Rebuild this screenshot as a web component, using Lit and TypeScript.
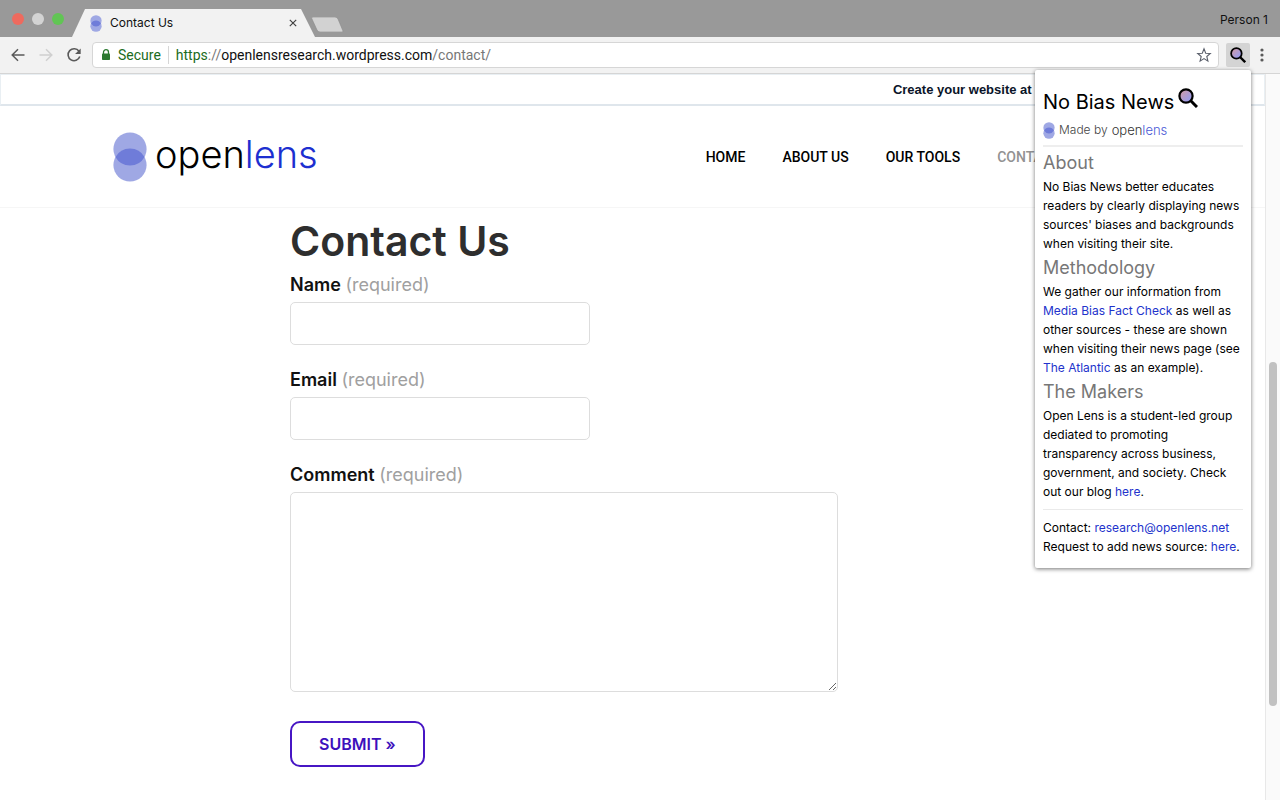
import { LitElement, html, css, svg } from "lit";
import { customElement } from "lit/decorators.js";

const lensMark = (cls: string) => html`
  <svg class=${cls} viewBox="0 0 34 50" aria-hidden="true">
    <circle cx="17" cy="17" r="16.6" fill="#9fa8e4" />
    <circle cx="17" cy="33" r="16.6" fill="#9fa8e4" />
    <path d="M2.5 25A16.6 16.6 0 0 1 31.5 25A16.6 16.6 0 0 1 2.5 25Z" fill="#6f7cd9" />
  </svg>
`;

const magnifier = (cls: string, id: string) => html`
  <svg class=${cls} viewBox="0 0 20 20" aria-hidden="true">
    ${svg`
      <defs>
        <linearGradient id=${id} x1="0" y1="0" x2="1" y2="1">
          <stop offset="0.1" stop-color="#cf9aa6" />
          <stop offset="0.8" stop-color="#9a9cec" />
        </linearGradient>
      </defs>
      <path d="M12.5 12.5L19 19" stroke="#000" stroke-width="3" />
      <circle cx="8" cy="8" r="6.6" fill="url(#${id})" stroke="#000" stroke-width="2.2" />
    `}
  </svg>
`;

@customElement("browser-chrome")
export class BrowserChrome extends LitElement {
  static styles = css`
    :host {
      display: block;
      font-family: Roboto, "Liberation Sans", sans-serif;
      color: #111;
    }
    button {
      border: 0;
      padding: 0;
      background: none;
      display: flex;
      align-items: center;
      justify-content: center;
    }
    svg {
      display: block;
    }
    .strip {
      display: flex;
      align-items: flex-end;
      height: 37px;
      background: #999;
      padding: 0 12px;
    }
    .lights {
      display: flex;
      gap: 8px;
      align-self: center;
      width: 60px;
    }
    .light {
      width: 12px;
      height: 12px;
      border-radius: 50%;
    }
    .red {
      background: #ee6a5e;
    }
    .grey {
      background: #d3d3d3;
    }
    .green {
      background: #61c554;
    }
    .tab {
      display: flex;
      align-items: center;
      width: 243px;
      height: 28px;
      box-sizing: border-box;
      padding: 0 16px 0 18px;
      background: #f2f2f2;
      clip-path: polygon(13px 0, 229px 0, 243px 100%, 0 100%);
    }
    .favicon {
      width: 12px;
      height: 17px;
    }
    .tabtitle {
      flex: 1;
      font: 12px/18px Inter, Roboto, sans-serif;
      padding-left: 8px;
    }
    .newtab {
      width: 33px;
      height: 15px;
      margin: 0 0 5px -4px;
    }
    .person {
      margin-left: auto;
      align-self: center;
      padding-top: 3px;
      font: 12px/18px Inter, Roboto, sans-serif;
    }
    .toolbar {
      display: flex;
      align-items: center;
      height: 36px;
      background: #f2f2f2;
      border-bottom: 1px solid #d5d5d5;
      padding: 0 8px 0 10px;
    }
    .nav {
      display: flex;
      gap: 12px;
      padding-right: 10px;
    }
    .nav button {
      width: 16px;
      height: 16px;
    }
    .omnibox {
      flex: 1;
      display: flex;
      align-items: center;
      height: 26px;
      box-sizing: border-box;
      background: #fff;
      border: 1px solid #d6d6d6;
      border-radius: 4px;
      padding: 0 6px 0 8px;
      font-size: 14px;
      line-height: 20px;
    }
    .secure {
      color: #1b6b20;
      padding: 0 7px;
      border-right: 1px solid #d6d6d6;
      line-height: 18px;
    }
    .url {
      flex: 1;
      padding-left: 7px;
      outline: none;
      white-space: nowrap;
    }
    .scheme {
      color: #1b6b20;
    }
    .dim {
      color: #777;
    }
    .ext {
      width: 24px;
      height: 24px;
      margin: 0 2px 0 7px;
      border-radius: 2px;
      background: #d4d4d4;
    }
    .lens {
      width: 16px;
      height: 16px;
    }
    .more {
      width: 20px;
      height: 20px;
    }
  `;

  render() {
    return html`
      <div class="strip">
        <div class="lights">
          <span class="light red"></span>
          <span class="light grey"></span>
          <span class="light green"></span>
        </div>
        <div class="tab">
          ${lensMark("favicon")}
          <span class="tabtitle">Contact Us</span>
          <button aria-label="Close tab">
            <svg width="12" height="12" viewBox="0 0 12 12">
              <path d="M2.8 2.8L9.2 9.2M9.2 2.8L2.8 9.2" stroke="#444" stroke-width="1.2" />
            </svg>
          </button>
        </div>
        <button class="newtab" aria-label="New tab">
          <svg width="33" height="15" viewBox="0 0 33 15">
            <path d="M2 0H24Q26 0 27 2L32 14Q32 15 31 15H9Q7 15 6 13L0.5 1Q0.500 0 2 0Z" fill="#d2d2d2" stroke="#8a8a8a" stroke-width="0.6" />
          </svg>
        </button>
        <span class="person">Person 1</span>
      </div>
      <div class="toolbar">
        <div class="nav">
          <button aria-label="Back">
            <svg width="16" height="16" viewBox="0 0 16 16" fill="none" stroke="#5a5a5a" stroke-width="1.5">
              <path d="M14.500 8H2.500M8 2.200L2.200 8L8 13.800" />
            </svg>
          </button>
          <button aria-label="Forward">
            <svg width="16" height="16" viewBox="0 0 16 16" fill="none" stroke="#d0d0d0" stroke-width="1.5">
              <path d="M1.500 8H13.500M8 2.200L13.800 8L8 13.800" />
            </svg>
          </button>
          <button aria-label="Reload">
            <svg width="16" height="16" viewBox="0 0 16 16">
              <path d="M13 4.200A6 6 0 1 0 13.800 9.600" fill="none" stroke="#5a5a5a" stroke-width="1.6" />
              <path d="M14.700 1.400V7H9.100Z" fill="#5a5a5a" />
            </svg>
          </button>
        </div>
        <div class="omnibox">
          <svg width="10" height="12" viewBox="0 0 10 12">
            <path d="M2.500 5V3.200A2.500 2.500 0 0 1 7.500 3.200V5" fill="none" stroke="#2c7a31" stroke-width="1.300" />
            <rect x="1" y="4.500" width="8" height="6.500" rx="0.800" fill="#2c7a31" />
          </svg>
          <span class="secure">Secure</span>
          <div class="url" role="textbox" aria-label="Address" contenteditable="true"><span class="scheme">https</span><span class="dim">://</span>openlensresearch.wordpress.com<span class="dim">/contact/</span></div>
          <button aria-label="Bookmark this page">
            <svg width="16" height="16" viewBox="0 0 16 16">
              <path d="M8 1.800L9.700 6.200L14.300 6.500L10.800 9.500L11.900 14.100L8 11.600L4.100 14.100L5.200 9.500L1.700 6.500L6.300 6.200Z" fill="none" stroke="#5a5f6b" stroke-width="1.100" />
            </svg>
          </button>
        </div>
        <button class="ext" aria-label="No Bias News">${magnifier("lens", "g1")}</button>
        <button class="more" aria-label="Menu">
          <svg width="4" height="16" viewBox="0 0 4 16" fill="#5a5a5a">
            <circle cx="2" cy="3" r="1.600" />
            <circle cx="2" cy="8" r="1.600" />
            <circle cx="2" cy="13" r="1.600" />
          </svg>
        </button>
      </div>
    `;
  }
}

@customElement("bias-popup")
export class BiasPopup extends LitElement {
  static styles = css`
    :host {
      display: block;
      box-sizing: border-box;
      width: 216px;
      padding: 18px 8px 12px;
      background: #fff;
      border-radius: 2px;
      box-shadow: 0 1px 4px rgba(0, 0, 0, 0.55);
      font: 12px/19px Inter, "Open Sans", sans-serif;
      color: #000;
    }
    .title {
      display: flex;
      gap: 4px;
      margin: 0;
      font-size: 20px;
      line-height: 28px;
      font-weight: 400;
      color: #000;
    }
    .glass {
      width: 20px;
      height: 20px;
    }
    .by {
      display: flex;
      align-items: center;
      line-height: 18px;
      margin: 5px 0 6px;
      color: #444;
      font-weight: 300;
    }
    .mark {
      width: 12px;
      height: 17px;
      margin-right: 4px;
    }
    .brand {
      font-size: 13px;
      margin-left: 4px;
      color: #333;
    }
    .brand span {
      color: #4a5ad6;
    }
    hr {
      border: 0;
      margin: 0;
      height: 2px;
      background: #eee;
    }
    .first {
      margin-bottom: 1px;
    }
    .thin {
      height: 1px;
      margin: 8px 0;
      background: #eaeaea;
    }
    h3 {
      margin: 0;
      font-size: 18px;
      line-height: 29px;
      font-weight: 400;
      color: #777;
    }
    p {
      margin: 0;
    }
    a {
      color: #2233cc;
      text-decoration: none;
    }
  `;

  render() {
    return html`
      <h2 class="title">No Bias News ${magnifier("glass", "g2")}</h2>
      <div class="by">${lensMark("mark")}Made by <span class="brand">open<span>lens</span></span></div>
      <hr class="first" />
      <h3>About</h3>
      <p>No Bias News better educates readers by clearly displaying news sources' biases and backgrounds when visiting their site.</p>
      <h3>Methodology</h3>
      <p>We gather our information from <a href="#">Media Bias Fact Check</a> as well as other sources - these are shown when visiting their news page (see <a href="#">The Atlantic</a> as an example).</p>
      <h3>The Makers</h3>
      <p>Open Lens is a student-led group dediated to promoting transparency across business, government, and society. Check out our blog <a href="#">here</a>.</p>
      <hr class="thin" />
      <p>Contact: <a href="#">research@openlens.net</a></p>
      <p>Request to add news source: <a href="#">here</a>.</p>
    `;
  }
}

@customElement("app-root")
export class AppRoot extends LitElement {
  static styles = css`
    :host {
      display: flex;
      flex-direction: column;
      min-height: 100vh;
      position: relative;
      background: #fff;
      font-family: Inter, "Open Sans", sans-serif;
    }
    .popup {
      position: absolute;
      top: 70px;
      right: 29px;
    }
    .view {
      flex: 1;
      display: flex;
    }
    .page {
      flex: 1;
      min-width: 0;
    }
    .banner {
      display: flex;
      justify-content: flex-end;
      padding: 0 130px 0 0;
      border: 1px solid #e9eff3;
      border-bottom: 2px solid #dfe6ec;
      font: bold 13px/29px "Liberation Sans", sans-serif;
    }
    .banner a {
      color: #0a1428;
      text-decoration: none;
    }
    .header {
      display: flex;
      align-items: center;
      justify-content: space-between;
      height: 101px;
      padding: 0 184px 0 113px;
      border-bottom: 1px solid #f6f6f6;
    }
    .logo {
      display: flex;
      align-items: center;
      gap: 8px;
      font: 300 38px/44px Inter, sans-serif;
      color: #000;
      text-decoration: none;
    }
    .wordmark {
      padding-bottom: 6px;
    }
    .mark {
      width: 34px;
      height: 50px;
    }
    .logo .lens {
      color: #1d2fd0;
    }
    .menu {
      display: flex;
      gap: 37px;
    }
    .menu a {
      font: 500 14px/20px Roboto, sans-serif;
      color: #000;
      text-decoration: none;
    }
    .menu .current {
      color: #929292;
    }
    .contact {
      padding: 5px 24px 32px 290px;
    }
    h1 {
      margin: 0 0 4px;
      font-size: 41px;
      line-height: 56px;
      font-weight: 600;
      color: #2e2e2e;
    }
    .field {
      display: block;
      margin-bottom: 23px;
      font-size: 18px;
      line-height: 24px;
      font-weight: 600;
      color: #111;
    }
    .req {
      font-weight: 400;
      color: #a0a0a0;
    }
    input,
    textarea {
      display: block;
      box-sizing: border-box;
      margin: 5px 0 0;
      padding: 8px;
      width: 300px;
      height: 43px;
      border: 1px solid #ddd;
      border-radius: 5px;
      background: #fff;
      font: 16px/24px Inter, sans-serif;
    }
    textarea {
      width: 548px;
      height: 200px;
    }
    .submit {
      margin-top: 6px;
      height: 46px;
      padding: 0 27px;
      border: 2px solid #4716c4;
      border-radius: 10px;
      background: #fff;
      color: #3c10bc;
      font: 600 16px/20px Inter, sans-serif;
    }
    .scroll {
      display: grid;
      grid-template-rows: 288fr 344fr 94fr;
      width: 8px;
      padding: 0 3px;
      background: #fafafa;
      border-left: 1px solid #e8e8e8;
    }
    .thumb {
      grid-row: 2;
      border-radius: 4px;
      background: #c1c1c1;
    }
  `;

  render() {
    return html`
      <browser-chrome></browser-chrome>
      <div class="view">
        <div class="page">
          <div class="banner"><a href="#">Create your website at WordPress.com</a></div>
          <header class="header">
            <a class="logo" href="#">${lensMark("mark")}<span class="wordmark">open<span class="lens">lens</span></span></a>
            <nav class="menu">
              <a href="#">HOME</a>
              <a href="#">ABOUT US</a>
              <a href="#">OUR TOOLS</a>
              <a href="#" class="current">CONTACT US</a>
            </nav>
          </header>
          <main class="contact">
            <h1>Contact Us</h1>
            <form>
              <label class="field">Name <span class="req">(required)</span><input type="text" /></label>
              <label class="field">Email <span class="req">(required)</span><input type="email" /></label>
              <label class="field">Comment <span class="req">(required)</span><textarea></textarea></label>
              <button class="submit" type="button">SUBMIT »</button>
            </form>
          </main>
        </div>
        <div class="scroll"><div class="thumb"></div></div>
      </div>
      <bias-popup class="popup"></bias-popup>
    `;
  }
}
